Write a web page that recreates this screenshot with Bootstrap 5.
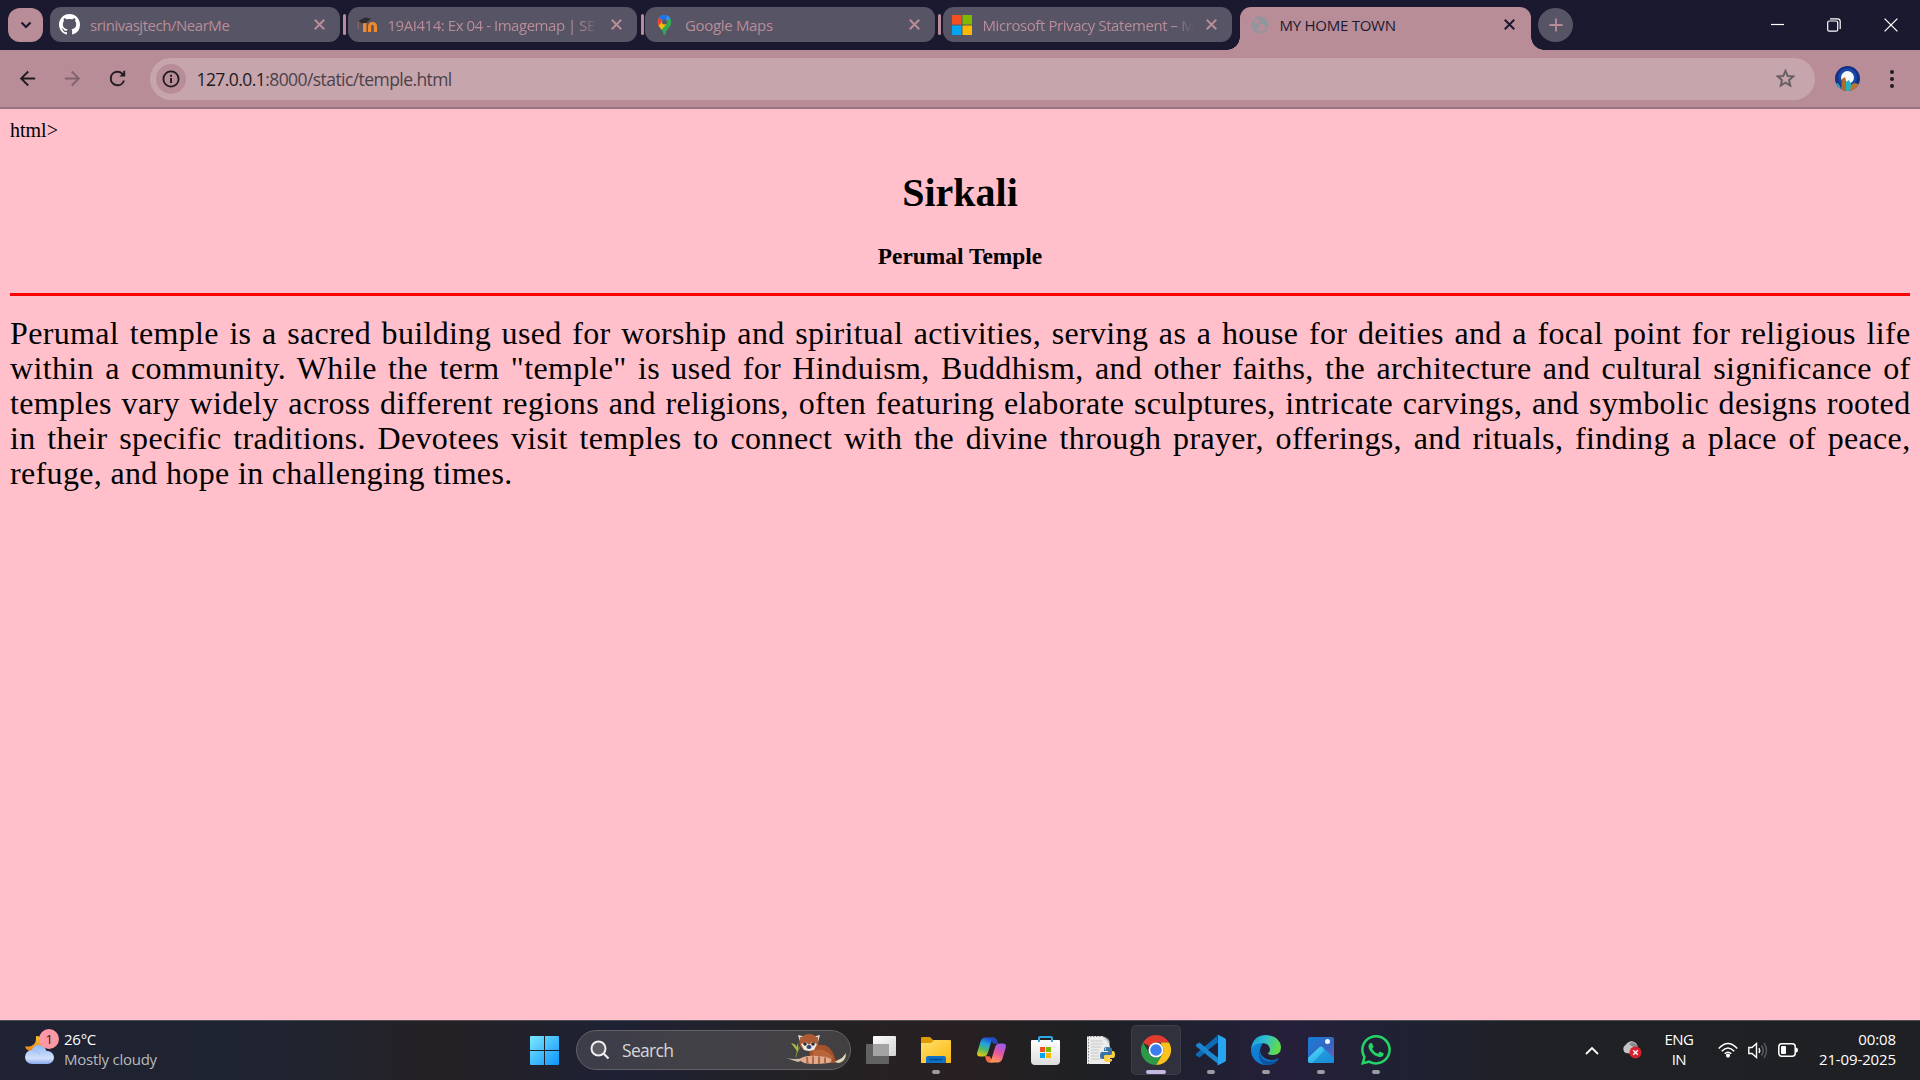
<!DOCTYPE html>
<html lang="en">
<head>
<meta charset="utf-8">
<title>MY HOME TOWN</title>
<link href="https://cdn.jsdelivr.net/npm/bootstrap@5.3.0/dist/css/bootstrap.min.css" rel="stylesheet">
<style>
  body { background: #ffc0cb; color: #000; font-family: "Open Sans", "Noto Sans", sans-serif; font-size: 15px; line-height: 20px; }
  svg { display: block; flex: none; }
  .strip { height: 50px; background: #1b1930; padding: 7px 0 0 8px; }
  .tab-menu { width: 35px; height: 34px; margin: 1px 7px 0 0; border-radius: 12px; background: #b98d98; color: #1b1930; }
  .tb { width: 289.5px; height: 35px; border-radius: 11px; background: #565465; color: #b98d98; padding: 0 15px 0 9px; }
  .tb-title { flex: 1 1 0; min-width: 0; margin: 0 6px 0 10px; overflow: hidden; white-space: nowrap; letter-spacing: -.46px; }
  .tb-fade { -webkit-mask-image: linear-gradient(90deg, #000 88%, transparent 97%); mask-image: linear-gradient(90deg, #000 88%, transparent 97%); }
  .tb-gap { width: 3px; height: 21px; margin: 7px 1.5px 0 3.5px; background: #b98d98; border-radius: 2px; }
  .tb-on { width: 291px; height: 43px; margin-left: 7.5px; padding-bottom: 8px; padding-right: 16px; border-radius: 11px 11px 0 0; background: #b98d98; color: #1b1930; }
  .tb-on::before, .tb-on::after { content: ""; position: absolute; bottom: 0; width: 13px; height: 13px; }
  .tb-on::before { right: 100%; background: radial-gradient(circle at 0 0, transparent 12.5px, #b98d98 13px); }
  .tb-on::after { left: 100%; background: radial-gradient(circle at 100% 0, transparent 12.5px, #b98d98 13px); }
  .tb-new { width: 35px; height: 34px; margin: 1px 0 0 7.5px; background: #565465; color: #b98d98; }
  .win { padding-right: 22px; height: 35px; gap: 43px; color: #fff; }
  .tools { height: 59px; background: #b98d98; border-bottom: 2px solid #957480; padding: 0 20px 0 16px; }
  .omni { width: 1665px; height: 42px; margin-left: 21px; border-radius: 21px; background: #c6a5ad; padding: 0 18px 0 6px; }
  .omni-info { width: 30px; height: 30px; background: #b98d98; }
  .omni-url { font-size: 17.5px; letter-spacing: -.57px; margin-left: 10.5px; color: #4c4149; }
  .omni-url b { font-weight: 400; color: #1d1b20; }
  .page { height: 911px; padding: 10px; font-family: "Liberation Serif", serif; font-size: 20px; line-height: 22px; }
  .page h1 { font-size: 40px; line-height: 45px; font-weight: 700; margin: 29px 0 0; }
  .page h3 { font-size: 23.4px; line-height: 26px; font-weight: 700; margin: 28px 0 0; }
  .page hr { height: 3px; border: 0; opacity: 1; background: #f00; margin: 24px 0 20px; }
  .story { font-size: 32px; line-height: 35px; letter-spacing: .34px; margin: 0; }
  .story span { display: block; white-space: nowrap; text-align-last: justify; margin-right: -.5px; }
  .story span:last-child { text-align-last: left; }
  .dock { height: 60px; padding-bottom: 1px; border-top: 1px solid #4d4f57; color: #fff;
    background: linear-gradient(90deg, #1f2232 0, #1f2430 15%, #252124 23%, #1e2134 32%, #242224 42%, #282022 50%, #1f2022 56%, #202033 63%, #261f3a 67%, #1f2233 73%, #202125 80%, #1f2024 100%); }
  .dock-left { width: 516px; padding-left: 24px; letter-spacing: -.25px; }
  .dock-text { margin: 0 0 3px 8px; }
  .dock-left small { font-size: 15px; color: #b9babd; }
  .dock-badge { left: 15px; top: -7px; width: 20px; height: 20px; background: #fe98a4; color: #2a1a20; font-size: 13px; line-height: 20px; }
  .find { width: 275px; height: 40px; margin: 0 2.5px 0 3px; border: 1px solid #626168; border-radius: 20px; background: linear-gradient(90deg, #3c3c4a, #424147 40%, #434042); padding: 0 4px 0 13px; font-size: 17.5px; letter-spacing: -.7px; color: #d6d6d9; }
  .slot { width: 55px; height: 60px; }
  .slot-on::before { content: ""; position: absolute; left: 2.5px; top: 5px; width: 50px; height: 50px; border-radius: 5px; background: #ffffff14; border: 1px solid #ffffff10; }
  .slot svg { position: relative; }
  .dot::after { content: ""; position: absolute; bottom: 6px; left: 23.5px; width: 8px; height: 4px; border-radius: 2px; background: #9b9ba3; }
  .slot-on::after { left: 17.5px; width: 20px; background: #c5b9e4; }
  .start-slot { width: 57px; }
  .tray { padding-right: 24px; }
  .lang { width: 30px; margin: 0 24px 2px 22px; letter-spacing: -.6px; }
  .clock { margin: 0 0 3px 21px; letter-spacing: -.12px; }
</style>
<script src="https://cdn.jsdelivr.net/npm/bootstrap@5.3.0/dist/js/bootstrap.bundle.min.js"></script>
</head>
<body class="overflow-hidden">
<svg width="0" height="0" class="position-absolute">
  <symbol id="x" viewBox="0 0 10 10"><path d="M.7.7l8.6 8.6M9.3.7L.7 9.3" fill="none" stroke="currentColor" stroke-width="1.8"/></symbol>
</svg>

<header>
  <div class="strip d-flex align-items-start">
    <div class="tab-menu d-flex align-items-center justify-content-center"><svg width="12" height="8" viewBox="0 0 12 8"><path d="M1.5 1.5L6 6l4.500-4.500" fill="none" stroke="currentColor" stroke-width="2.200"/></svg></div>

    <div class="tb d-flex align-items-center">
      <svg width="21" height="21" viewBox="0 0 16 16" fill="#fff"><path d="M8 0C3.580 0 0 3.580 0 8c0 3.540 2.290 6.530 5.470 7.590.4.070.55-.17.55-.38 0-.19-.01-.82-.01-1.490-2.010.37-2.530-.49-2.690-.94-.09-.23-.48-.94-.82-1.130-.28-.15-.68-.52-.01-.53.63-.01 1.080.58 1.230.82.72 1.210 1.870.87 2.330.66.07-.52.28-.87.51-1.070-1.780-.2-3.640-.89-3.640-3.950 0-.87.31-1.590.82-2.150-.08-.2-.36-1.020.08-2.120 0 0 .67-.21 2.200.82.64-.18 1.320-.27 2-.27s1.360.09 2 .27c1.530-1.040 2.200-.82 2.200-.82.44 1.100.16 1.920.08 2.120.51.56.82 1.270.82 2.150 0 3.070-1.870 3.750-3.650 3.950.29.25.54.73.54 1.480 0 1.070-.01 1.930-.01 2.200 0 .21.15.46.55.38A8.010 8.010 0 0 0 16 8c0-4.420-3.580-8-8-8z"/></svg>
      <span class="tb-title">srinivasjtech/NearMe</span>
      <svg width="11" height="11"><use href="#x"/></svg>
    </div>
    <div class="tb-gap"></div>
    <div class="tb d-flex align-items-center">
      <svg width="21" height="20" viewBox="0 0 21 20"><path d="M6 8h3.500v9H6zM11 17v-5.500C11 8.500 12.500 7 15.500 7S20 8.500 20 11.500V17h-3.200v-5.200c0-1.300-.4-2-1.300-2s-1.300.7-1.300 2V17z" fill="#ee8a2c"/><path d="M1 6l7-3.500 6 1-5 4.500-4 .3z" fill="#2e2c31"/><path d="M2 6.500Q.3 10 1.500 14" fill="none" stroke="#a0645a" stroke-width="1.200"/></svg>
      <span class="tb-title tb-fade">19AI414: Ex 04 - Imagemap | SE</span>
      <svg width="11" height="11"><use href="#x"/></svg>
    </div>
    <div class="tb-gap"></div>
    <div class="tb d-flex align-items-center">
      <svg width="21" height="20" viewBox="0 0 20 20"><clipPath id="pin"><path d="M10 0a7 7 0 0 1 7 7c0 5-5 6-6 12q-1 2-2 0C8 13 3 12 3 7a7 7 0 0 1 7-7z"/></clipPath><g clip-path="url(#pin)"><path d="M0 0h20v20H0z" fill="#34a853"/><path d="M0 14L14 0H0z" fill="#ea4335"/><path d="M4 0h13v2.500L10 7 4.500 3z" fill="#4285f4"/><path d="M4.600 2.600L10 7 13 0H6z" fill="#1a73e8"/><path d="M3 9.500L8 5l4 4-6 7z" fill="#fbbc04"/><path d="M0 3.500h4.800L8 6l-4 5H0z" fill="#ea4335"/></g><circle cx="10" cy="7" r="2.500" fill="#565465"/></svg>
      <span class="tb-title" style="letter-spacing:-.33px">Google Maps</span>
      <svg width="11" height="11"><use href="#x"/></svg>
    </div>
    <div class="tb-gap"></div>
    <div class="tb d-flex align-items-center">
      <svg width="21" height="20" viewBox="0 0 21 20"><path d="M0 0h9.500v9.500H0z" fill="#f25022"/><path d="M10.500 0H20v9.500h-9.500z" fill="#7fba00"/><path d="M0 10.500h9.500V20H0z" fill="#00a4ef"/><path d="M10.500 10.500H20V20h-9.500z" fill="#ffb900"/></svg>
      <span class="tb-title tb-fade" style="letter-spacing:-.42px">Microsoft Privacy Statement – M</span>
      <svg width="11" height="11"><use href="#x"/></svg>
    </div>
    <div class="tb tb-on d-flex align-items-center position-relative">
      <svg width="21" height="20" viewBox="0 0 20 20"><circle cx="10.500" cy="10" r="7.600" fill="none" stroke="#8e979d" stroke-width="1.600"/><path d="M3 8l5 .3 2.800 2-1.500 2.200-1.800.8.5 2L11 17.500q-5 .8-7.500-4zM10 3l5 1.500 2.800 4-.2 2.800-3.600-.6-.5-2-2.500.2-2-1.800z" fill="#8e979d"/></svg>
      <span class="tb-title" style="letter-spacing:-.26px">MY HOME TOWN</span>
      <svg width="11" height="11"><use href="#x"/></svg>
    </div>
    <div class="tb-new rounded-circle d-flex align-items-center justify-content-center"><svg width="14" height="14" viewBox="0 0 14 14"><path d="M7 .5v13M.5 7h13" stroke="currentColor" stroke-width="1.800"/></svg></div>

    <div class="win ms-auto d-flex align-items-center">
      <svg width="13" height="14" viewBox="0 0 13 14"><path d="M0 6.500h13" stroke="currentColor" stroke-width="1.200"/></svg>
      <svg width="14" height="14" viewBox="0 0 14 14" fill="none" stroke="currentColor" stroke-width="1.200"><rect x=".7" y="3" width="10" height="10.200" rx="1.500"/><path d="M3 .8h7.500q2.700 0 2.700 2.700V11"/></svg>
      <svg width="14" height="14" viewBox="0 0 14 14"><path d="M.6.6l12.800 12.800M13.400.6L.6 13.400" stroke="currentColor" stroke-width="1.300"/></svg>
    </div>
  </div>

  <div class="tools d-flex align-items-center">
    <svg width="23" height="23" viewBox="0 0 24 24" fill="#1f1b20"><path d="M20 11H7.830l5.590-5.590L12 4l-8 8 8 8 1.410-1.410L7.830 13H20z"/></svg>
    <svg width="23" height="23" viewBox="0 0 24 24" fill="#7f646e" style="margin-left:22px"><path d="M4 11h12.170l-5.590-5.590L12 4l8 8-8 8-1.410-1.410L16.170 13H4z"/></svg>
    <svg width="23" height="23" viewBox="0 0 24 24" fill="#1f1b20" style="margin-left:22px"><path d="M17.650 6.350A7.960 7.960 0 0 0 12 4a8 8 0 1 0 7.730 10h-2.080A6 6 0 1 1 12 6c1.660 0 3.140.69 4.220 1.780L14 10h6V4h-2v2.700z"/></svg>
    <div class="omni d-flex align-items-center">
      <div class="omni-info rounded-circle d-flex align-items-center justify-content-center"><svg width="18" height="18" viewBox="0 0 18 18"><circle cx="9" cy="9" r="7.600" fill="none" stroke="#1f1b20" stroke-width="1.800"/><path d="M8.100 8h1.900v5H8.100zM8.100 4.800h1.900v1.900H8.100z" fill="#1f1b20"/></svg></div>
      <div class="omni-url"><b>127.0.0.1</b>:8000/static/temple.html</div>
      <svg class="ms-auto" width="23" height="23" viewBox="0 0 24 24" fill="#635b60" stroke="#635b60" stroke-width=".4"><path d="M22 9.240l-7.190-.62L12 2 9.190 8.630 2 9.240l5.460 4.730L5.820 21 12 17.270 18.180 21l-1.630-7.030zM12 15.400l-3.760 2.270 1-4.280-3.320-2.880 4.380-.38L12 6.100l1.710 4.040 4.380.38-3.320 2.880 1 4.280z"/></svg>
    </div>
    <svg width="25" height="25" viewBox="0 0 25 25" style="margin-left:20px"><clipPath id="av"><circle cx="12.500" cy="12.500" r="12.500"/></clipPath><g clip-path="url(#av)"><path d="M0 0h25v25H0z" fill="#123184"/><circle cx="12.500" cy="11.500" r="9.500" fill="#1a47a8"/><circle cx="12.500" cy="11.500" r="6.500" fill="#f4f8fb"/><path d="M0 18l3-1 2 3 2 5H0z" fill="#2aa5b8"/><path d="M6 25l1-12 3-2 1.500 5V25z" fill="#b06c2e"/><path d="M11 25v-9l3-2 2 4v7z" fill="#25b1bf"/><path d="M15 25l1-6 3-2 5 1-1 7z" fill="#b87730"/></g></svg>
    <svg class="ms-auto" width="16" height="18" viewBox="0 0 16 18" fill="#1f1b20"><circle cx="8" cy="2" r="2"/><circle cx="8" cy="9" r="2"/><circle cx="8" cy="16" r="2"/></svg>
  </div>
</header>

<main class="page">
  <div>html&gt;</div>
  <h1 class="text-center">Sirkali</h1>
  <h3 class="text-center">Perumal Temple</h3>
  <hr>
  <p class="story">
    <span>Perumal temple is a sacred building used for worship and spiritual activities, serving as a house for deities and a focal point for religious life</span>
    <span>within a community. While the term "temple" is used for Hinduism, Buddhism, and other faiths, the architecture and cultural significance of</span>
    <span>temples vary widely across different regions and religions, often featuring elaborate sculptures, intricate carvings, and symbolic designs rooted</span>
    <span>in their specific traditions. Devotees visit temples to connect with the divine through prayer, offerings, and rituals, finding a place of peace,</span>
    <span>refuge, and hope in challenging times.</span>
  </p>
</main>

<footer class="dock d-flex align-items-center">
  <div class="dock-left d-flex align-items-center">
    <div class="position-relative">
      <svg width="32" height="28" viewBox="0 0 32 28"><defs><linearGradient id="moon" x2="0" y2="1"><stop stop-color="#f8c630"/><stop offset="1" stop-color="#ef7e12"/></linearGradient><linearGradient id="cl" x2="0" y2="1"><stop stop-color="#8fb8f8"/><stop offset=".7" stop-color="#d3e0fa"/><stop offset="1" stop-color="#86a9ee"/></linearGradient></defs><path d="M12 0q7 0 9 6l-4 9H6Q2 14 1 10.500q12 1 11-10.500z" fill="url(#moon)"/><path d="M8 28a7 7 0 0 1 0-14q1.500-5 7-5t7.500 6h1a6.500 6.500 0 0 1 0 13z" fill="url(#cl)"/><path d="M8 15q5-1.500 8 3" fill="none" stroke="#9bbcf2"/></svg>
      <div class="dock-badge position-absolute rounded-circle text-center">1</div>
    </div>
    <div class="dock-text"><div>26°C</div><small class="d-block">Mostly cloudy</small></div>
  </div>

  <div class="start-slot d-flex justify-content-center"><svg width="29" height="29" viewBox="0 0 29 29"><defs><linearGradient id="st" x2="1" y2="1"><stop stop-color="#7ceafc"/><stop offset=".5" stop-color="#43bdfd"/><stop offset="1" stop-color="#0e94f9"/></linearGradient></defs><path d="M1 0h13v14H0V1q0-1 1-1zM15 0h13q1 0 1 1v13H15zM0 15h14v14H1q-1 0-1-1zM15 15h14v13q0 1-1 1H15z" fill="url(#st)"/></svg></div>

  <div class="find d-flex align-items-center">
    <svg width="20" height="20" viewBox="0 0 20 20"><circle cx="8.500" cy="8.500" r="7" fill="#5c5b62" stroke="#eee" stroke-width="2"/><path d="M13.800 13.800l4.700 4.700" stroke="#eee" stroke-width="2.200"/></svg>
    <span style="margin-left:12px">Search</span>
    <svg class="ms-auto" width="60" height="34" viewBox="0 0 60 34">
      <path d="M0 25q8 2 18 0l6-1-12 5z" fill="#c9bfa4"/><path d="M48 29l8-4 4-5q0 8-7 10z" fill="#e3dab8"/>
      <path d="M10 24l1-5 3-5" fill="none" stroke="#7a9336"/><path d="M11 18l-6-8q7 1 6 8zM11 20q-1-6 1-10 1 6-1 10z" fill="#a8bd3a"/>
      <path d="M23 16q17-10 24 4 4 8 1 10H25z" fill="#a5522c"/><path d="M27 18q10-5 20 6l-2 4q-8-8-18-4z" fill="#b9653b"/>
      <path d="M13 27q4-5 18-4 9 0 14 3 2 3-3 4-14 2-24 0z" fill="#e3ab8b"/><path d="M21 24l.500 7M27 23.500v7.500M33 23.500v7.500M39 24.500v6" stroke="#a8684c" stroke-width="2"/>
      <path d="M12 2l8 2-5 8zM34 2l-8 2 5 9z" fill="#e9dccd"/><path d="M14 4l4 1-3 4zM32 4l-4 1 3 4z" fill="#6f3a28"/>
      <ellipse cx="23" cy="9.500" rx="9.500" ry="8.500" fill="#ad5b34"/><path d="M15 11l5-2 3 3 3-3 5 2-3 6-5 1-5-1z" fill="#f0e8e1"/><circle cx="19" cy="11" r="1.800" fill="#332a30"/><circle cx="27" cy="11" r="1.800" fill="#332a30"/><ellipse cx="23" cy="14" rx="2.500" ry="2" fill="#30456e"/>
    </svg>
  </div>

  <div class="slot d-flex align-items-center justify-content-center"><svg width="30" height="28" viewBox="0 0 30 28"><defs><linearGradient id="tv" x2="1" y2="1"><stop stop-color="#fff"/><stop offset="1" stop-color="#d2d2d2"/></linearGradient></defs><rect y="8" width="23" height="20" rx="1" fill="#626262"/><rect x="7" width="23" height="20" rx="1" fill="url(#tv)"/><path d="M7 8h16v12H8q-1 0-1-1z" fill="#a3a3a3"/></svg></div>

  <div class="slot dot position-relative d-flex align-items-center justify-content-center"><svg width="30" height="27" viewBox="0 0 30 27"><defs><linearGradient id="fo" x2="1" y2="1"><stop stop-color="#ffe069"/><stop offset="1" stop-color="#fcb712"/></linearGradient></defs><path d="M0 1q0-1 1-1h8l3 3h17v8H0z" fill="#dd9c06"/><path d="M0 6h10l3-3h16q1 0 1 1v22H0z" fill="url(#fo)"/><path d="M5 26v-5q0-2 2-2h16q2 0 2 2v5z" fill="#0d72c7"/><path d="M9 22.500h12" stroke="#0b4b8c" stroke-width="1.500" stroke-linecap="round"/></svg></div>

  <div class="slot d-flex align-items-center justify-content-center"><svg width="29" height="26" viewBox="0 0 29 26"><defs><linearGradient id="c1" x1=".6" x2=".3" y2="1"><stop stop-color="#1b4fd6"/><stop offset=".35" stop-color="#22a5dc"/><stop offset=".65" stop-color="#56b765"/><stop offset="1" stop-color="#e9c80f"/></linearGradient><linearGradient id="c2" x1=".7" x2=".3" y2="1"><stop stop-color="#9a5cf0"/><stop offset=".5" stop-color="#e8569b"/><stop offset="1" stop-color="#ff9d54"/></linearGradient></defs><path d="M21 7l-1-4q-1-2.500-3-2.500h-4l3 6z" fill="#2447b9"/><path d="M8 19l1 4q1 2.500 3 2.500h4l-3-6z" fill="#f06a4a"/><path d="M8 .5h9q-2 1-3 5l-3 10q-1 4-5 4H3q-4 0-2.500-5l3-10Q5 .5 8 .5z" fill="url(#c1)"/><path d="M21 25.500h-9q2-1 3-5l3-10q1-4 5-4h3q4 0 2.500 5l-3 10q-1.500 4-4.500 4z" fill="url(#c2)"/></svg></div>

  <div class="slot d-flex align-items-center justify-content-center"><svg width="30" height="29" viewBox="0 0 30 29"><defs><linearGradient id="sg" x2="0" y2="1"><stop stop-color="#fff"/><stop offset="1" stop-color="#dcdcdc"/></linearGradient></defs><path d="M8 6V2q0-1 1-1h11q1 0 1 1v4" fill="none" stroke="#2ba9e4" stroke-width="2"/><path d="M0 5q0-1 1-1h27q1 0 1 1v20q0 4-4 4H4q-4 0-4-4z" fill="url(#sg)"/><path d="M9 11h5v5H9z" fill="#f25022"/><path d="M15 11h5v5h-5z" fill="#7fba00"/><path d="M9 17h5v5H9z" fill="#00a4ef"/><path d="M15 17h5v5h-5z" fill="#ffb900"/><path d="M7 4h2v2H7zM20 4h2v2h-2z" fill="#2ba9e4"/></svg></div>

  <div class="slot d-flex align-items-center justify-content-center"><svg width="28" height="29" viewBox="0 0 28 29"><path d="M0 0h15q8 4 8 12v16H0z" fill="#ececec"/><path d="M1.500 0v28M0 .5h15" stroke="#8b8b8b" stroke-dasharray="1.500 1.500"/><path d="M4 5h11M4 8h12M4 11h10M4 14h8M4 17h8M4 20h8M4 23h10" stroke="#c8c8c8"/><path d="M15 0l8 8q0-6-8-8z" fill="#bbb"/><path d="M20 11q-3 0-3 2v2h4v1h-6q-2 0-2 4 0 3 2 3h2v-2q0-2 2-2h4q2 0 2-2v-4q0-2-5-2z" fill="#3a74a5"/><path d="M25 15h1q2 0 2 4 0 3-2 3h-5v1h4v1q0 2-4 2t-4-2v-3q0-2 2-2h4q2 0 2-2z" fill="#fdcf43"/><circle cx="18.500" cy="13" r=".7" fill="#fff"/></svg></div>

  <div class="slot slot-on dot position-relative d-flex align-items-center justify-content-center"><svg width="30" height="30" viewBox="0 0 48 48"><path d="M24 0a24 24 0 0 1 20.800 12H24a12 12 0 0 0-10.400 6L3.200 12A24 24 0 0 1 24 0z" fill="#e33b2e"/><path d="M44.800 12A24 24 0 0 1 24 48l10.400-18A12 12 0 0 0 34.400 18L31 12z" fill="#fcc21b"/><path d="M24 48A24 24 0 0 1 3.200 12l10.400 18A12 12 0 0 0 34.400 30z" fill="#2c9a47"/><circle cx="24" cy="24" r="12" fill="#fff"/><circle cx="24" cy="24" r="9.300" fill="#3b7ded"/></svg></div>

  <div class="slot dot position-relative d-flex align-items-center justify-content-center"><svg width="30" height="30" viewBox="0 0 30 30"><path d="M22 7.500L3.500 22.500 0 20.500v-1.800L21 1z" fill="#0d6cb4"/><path d="M0 9.500l3.500-2L22 22.500V29L0 11.300z" fill="#1a86d0"/><path d="M21 0q1-.3 2 .2l6 3q1 .5 1 1.800v20q0 1.300-1 1.800l-6 3q-1 .5-2 .2 1-.5 1-2V2q0-1.500-1-2z" fill="#28a5f1"/><path d="M22 7.500L12 15l10 7.500z" fill="#20203a"/></svg></div>

  <div class="slot dot position-relative d-flex align-items-center justify-content-center"><svg width="30" height="30" viewBox="0 0 30 30"><defs><linearGradient id="e1" x2="1" y2=".3"><stop stop-color="#1b96d8"/><stop offset=".5" stop-color="#30bfd1"/><stop offset="1" stop-color="#61dc4c"/></linearGradient><linearGradient id="e2" x2="0" y2="1"><stop stop-color="#1183d4"/><stop offset="1" stop-color="#0f7ad2"/></linearGradient></defs><path d="M0 14Q5 6 12 8q-6 8 0 14 7 6 16 1-5 7-13 7A15 15 0 0 1 0 14z" fill="url(#e2)"/><path d="M12 9q-6 7-1 14 6 6 17 1-5 7-13 6-7-2-7-10 0-7 4-11z" fill="#0d55a2"/><path d="M0 14Q2 0 15 0q14 1 15 12 0 8-8 8-5 0-5-2 2-1 2-4-1-6-8-6T0 14z" fill="url(#e1)"/></svg></div>

  <div class="slot dot position-relative d-flex align-items-center justify-content-center"><svg width="26" height="26" viewBox="0 0 26 26"><defs><linearGradient id="ph" x2="1" y2="1"><stop stop-color="#187dd8"/><stop offset=".6" stop-color="#3765c0"/><stop offset="1" stop-color="#8a59b6"/></linearGradient><linearGradient id="ph2" x2="1" y2="1"><stop stop-color="#54e0fc"/><stop offset="1" stop-color="#1791dd"/></linearGradient><clipPath id="pc"><rect width="26" height="26" rx="2"/></clipPath></defs><g clip-path="url(#pc)"><path d="M0 0h26v26H0z" fill="url(#ph)"/><path d="M0 21L11 10.500q2-2 4 0L26 21v5H0z" fill="url(#ph2)"/><path d="M15 10.500L26 21v5H4l12-12z" fill="#1787d2" opacity=".65"/></g><circle cx="19.500" cy="4.500" r="2.500" fill="#f3f3fb"/></svg></div>

  <div class="slot dot position-relative d-flex align-items-center justify-content-center"><svg width="30" height="30" viewBox="0 0 16 16" fill="#25d366"><path d="M13.601 2.326A7.850 7.850 0 0 0 7.994 0C3.627 0 .068 3.558.064 7.926c0 1.399.366 2.760 1.057 3.965L0 16l4.204-1.102a7.900 7.900 0 0 0 3.790.965h.004c4.368 0 7.926-3.558 7.930-7.930A7.900 7.900 0 0 0 13.600 2.326zM7.994 14.521a6.600 6.600 0 0 1-3.356-.92l-.24-.144-2.494.654.666-2.433-.156-.251a6.560 6.560 0 0 1-1.007-3.505c0-3.626 2.957-6.584 6.591-6.584a6.560 6.560 0 0 1 4.660 1.931 6.560 6.560 0 0 1 1.928 4.660c-.004 3.639-2.961 6.592-6.592 6.592m3.615-4.934c-.197-.099-1.170-.578-1.353-.646-.182-.065-.315-.099-.445.099-.133.197-.513.646-.627.775-.114.133-.232.148-.43.05-.197-.1-.836-.308-1.592-.985-.59-.525-.985-1.175-1.103-1.372-.114-.198-.011-.304.088-.403.087-.088.197-.232.296-.346.1-.114.133-.198.198-.33.065-.134.034-.248-.015-.347-.05-.099-.445-1.076-.612-1.470-.16-.389-.323-.335-.445-.34-.114-.007-.247-.007-.38-.007a.73.73 0 0 0-.529.247c-.182.198-.691.677-.691 1.654s.71 1.916.81 2.049c.098.133 1.394 2.132 3.383 2.992.47.205.84.326 1.129.418.475.152.904.129 1.246.08.38-.058 1.171-.48 1.338-.943.164-.464.164-.86.114-.992-.049-.133-.182-.198-.38-.297"/></svg></div>

  <div class="tray ms-auto d-flex align-items-center">
    <svg width="14" height="9" viewBox="0 0 14 9"><path d="M1 8l6-6 6 6" fill="none" stroke="#fff" stroke-width="1.800"/></svg>
    <svg width="21" height="18" viewBox="0 0 21 18" style="margin-left:22px"><path d="M5 12a4.500 4.500 0 0 1-.5-8Q8-.5 12 .5q4 1 4.500 5L12 13z" fill="#c4c4c4"/><path d="M8 3q4-4 8 1l1 3h-4z" fill="#8d8d8d"/><circle cx="14.500" cy="11.500" r="6" fill="#d9202e"/><path d="M12.200 9.200l4.600 4.600M16.800 9.200l-4.600 4.600" stroke="#fff" stroke-width="1.400"/></svg>
    <div class="lang text-center"><div>ENG</div><div>IN</div></div>
    <svg width="20" height="16" viewBox="0 0 20 16" fill="none" stroke="#fff" stroke-width="1.500"><path d="M.7 6.500q9.300-10 18.600 0M3.700 9.200q6.300-6.600 12.600 0M6.700 11.800q3.300-3.300 6.600 0"/><circle cx="10" cy="13.600" r="1.300" fill="#fff"/></svg>
    <svg width="20" height="17" viewBox="0 0 20 17" fill="none" stroke="#fff" stroke-width="1.400" style="margin-left:10px"><path d="M.8 5.500H4L8.500 1.500v14L4 11.500H.8z"/><path d="M11 6q1.500 2.500 0 5"/><path d="M13.500 3.500q3.500 5 0 10M16 1.200q5 7.300 0 14.600" stroke="#5d5d61"/></svg>
    <svg width="20" height="14" viewBox="0 0 20 14" style="margin-left:10px"><rect x=".8" y=".8" width="16.400" height="12.400" rx="3" fill="none" stroke="#fff" stroke-width="1.500"/><rect x="3" y="3" width="5" height="8" rx="1" fill="#fff"/><path d="M18 4.500q2 0 2 2.500t-2 2.500z" fill="#fff"/></svg>
    <div class="clock text-end"><div>00:08</div><div>21-09-2025</div></div>
  </div>
</footer>
</body>
</html>
